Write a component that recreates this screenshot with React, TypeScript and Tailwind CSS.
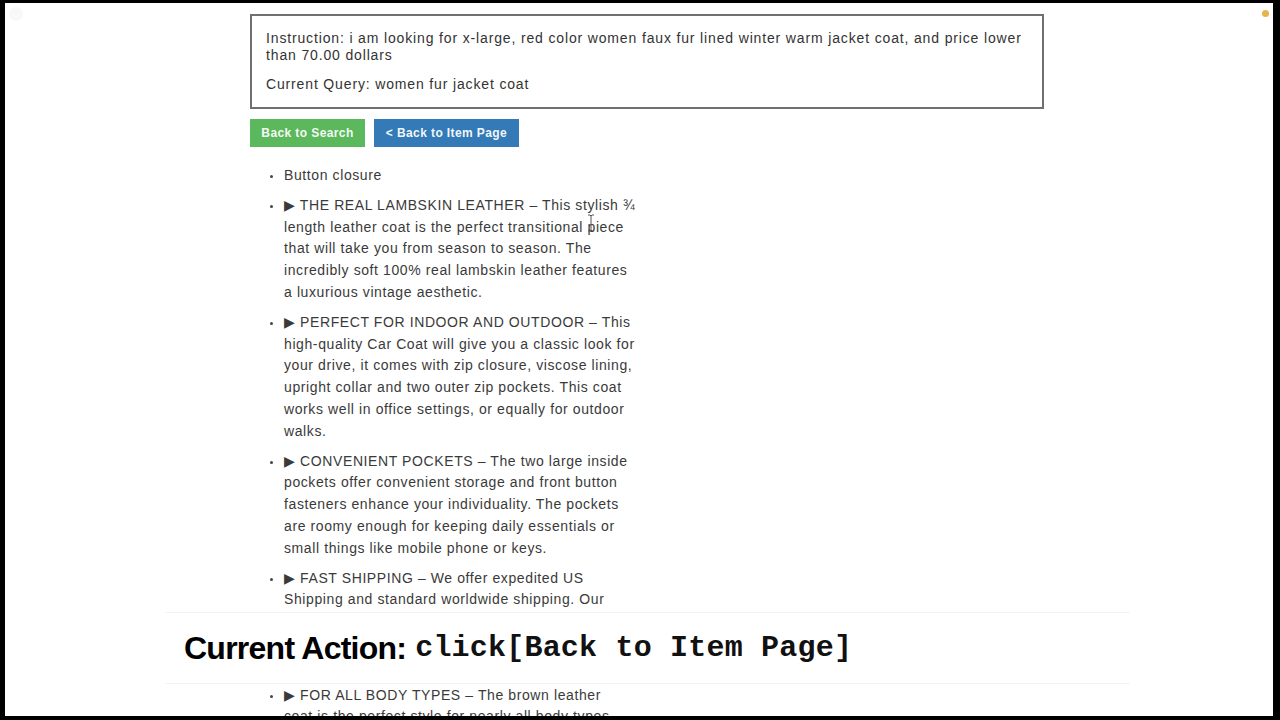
const items: string[][] = [
  ["Button closure"],
  [
    "▶ THE REAL LAMBSKIN LEATHER – This stylish ¾",
    "length leather coat is the perfect transitional piece",
    "that will take you from season to season. The",
    "incredibly soft 100% real lambskin leather features",
    "a luxurious vintage aesthetic.",
  ],
  [
    "▶ PERFECT FOR INDOOR AND OUTDOOR – This",
    "high-quality Car Coat will give you a classic look for",
    "your drive, it comes with zip closure, viscose lining,",
    "upright collar and two outer zip pockets. This coat",
    "works well in office settings, or equally for outdoor",
    "walks.",
  ],
  [
    "▶ CONVENIENT POCKETS – The two large inside",
    "pockets offer convenient storage and front button",
    "fasteners enhance your individuality. The pockets",
    "are roomy enough for keeping daily essentials or",
    "small things like mobile phone or keys.",
  ],
  [
    "▶ FAST SHIPPING – We offer expedited US",
    "Shipping and standard worldwide shipping. Our",
    "products are shipped within 1-2 business days and",
    "arrive quickly, so you can enjoy your new coat",
    "without a long wait.",
  ],
  [
    "▶ FOR ALL BODY TYPES – The brown leather",
    "coat is the perfect style for nearly all body types",
    "and sizes.",
  ],
];

export default function App() {
  return (
    <div className="h-[720px] w-[1280px] overflow-hidden bg-black pb-[4px] pl-[5px] pr-[7px] pt-[3px]">
      <div className="relative h-full w-full overflow-hidden bg-white font-['Liberation_Sans',Arial,sans-serif] text-[#333]">
        {/* faint marks in the corners */}
        <div className="absolute left-[4px] top-[4px] h-[14px] w-[14px] rounded-full bg-[#f8f8f8]" />
        <div className="absolute left-[1257px] top-[7px] h-[7px] w-[7px] rounded-full bg-[#e5b54c] blur-[0.5px]" />

        {/* text cursor */}
        <svg className="absolute left-[582px] top-[211px]" width="8" height="18" viewBox="0 0 8 18">
          <path d="M1 1h2l1 1 1-1h2M4 2v14M1 17h2l1-1 1 1h2" fill="none" stroke="#555" strokeWidth="1" />
        </svg>

        <div className="ml-[245px] w-[794px] pt-[11px]">
          <div className="border-2 border-[#707070] px-[14px] pb-[14px] pt-[14px] text-[14px] leading-[17px] tracking-[0.85px]">
            <p className="whitespace-nowrap">
              Instruction: i am looking for x-large, red color women faux fur lined winter warm jacket coat, and price lower
            </p>
            <p className="whitespace-nowrap">than 70.00 dollars</p>
            <p className="mt-[12px] whitespace-nowrap">Current Query: women fur jacket coat</p>
          </div>

          <div className="mt-[10px] flex gap-[9px]">
            <button className="flex h-[28px] w-[115px] items-center justify-center bg-[#5cb85c] text-[12px] font-bold tracking-[0.4px] text-white/95">
              Back to Search
            </button>
            <button className="flex h-[28px] w-[145px] items-center justify-center bg-[#337ab7] text-[12px] font-bold tracking-[0.4px] text-white/95">
              &lt; Back to Item Page
            </button>
          </div>

          <ul className="mt-[18px] text-[14px] leading-[21.8px] tracking-[0.6px] text-[#3a3a3a]">
            {items.map((lines, i) => (
              <li key={i} className="mb-[8px] flex">
                <div className="w-[34px] shrink-0 pl-[20px] pt-[10px]">
                  <div className="h-[3px] w-[3px] rounded-full bg-[#444]" />
                </div>
                <div>
                  {lines.map((l, j) => (
                    <div key={j} className="whitespace-nowrap">
                      {l}
                    </div>
                  ))}
                </div>
              </li>
            ))}
          </ul>
        </div>

        {/* caption band over the page */}
        <div className="absolute left-[160px] top-[609px] flex h-[72px] w-[965px] items-center border-b border-t border-[#f3f3f3] bg-white pl-[19px]">
          <span className="text-[32px] font-bold tracking-[-0.75px] text-black">Current Action:</span>
          <span className="ml-[9px] font-['Liberation_Mono','Courier_New',monospace] text-[30px] font-bold tracking-[0.2px] text-[#111]">
            click[Back to Item Page]
          </span>
        </div>
      </div>
    </div>
  );
}
